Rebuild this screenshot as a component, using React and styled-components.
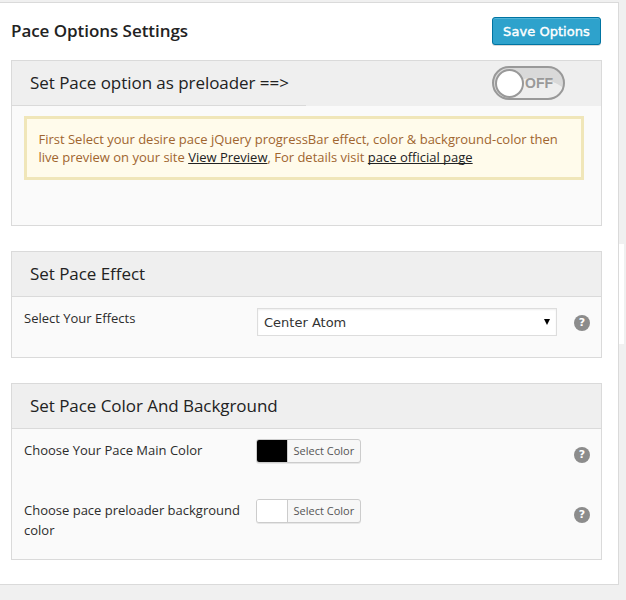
import React from "react";
import styled, { createGlobalStyle } from "styled-components";

const GlobalStyle = createGlobalStyle`
  * { box-sizing: border-box; }
  body { margin: 0; background: #f0f0f0; font-family: "Open Sans", sans-serif; color: #222; }
  button { font: inherit; }
`;

const Page = styled.div`
  display: flex;
  align-items: flex-start;
  width: 626px;
  height: 600px;
  padding-top: 2px;
  overflow: hidden;
`;

const Card = styled.main`
  width: 619px;
  height: 583px;
  padding: 14px 16px 0 11px;
  background: #fff;
  border: 1px solid #dadada;
  border-left: 0;
`;

const SideTab = styled.div`
  width: 5px;
  height: 100px;
  margin-top: 242px;
  background: #fff;
`;

const TopBar = styled.header`
  display: flex;
  justify-content: space-between;
  align-items: flex-start;
  height: 43px;
`;

const Title = styled.h1`
  margin: 2px 0 0;
  font-size: 17px;
  line-height: 24px;
  font-weight: 600;
  letter-spacing: -0.05px;
`;

const SaveButton = styled.button`
  width: 109px;
  height: 28px;
  margin-right: 1px;
  padding: 0;
  border: 1px solid #0074a2;
  border-radius: 3px;
  background: #2ea2cc;
  box-shadow: inset 0 1px 0 rgba(120, 200, 230, 0.5), 0 1px 0 rgba(0, 0, 0, 0.15);
  color: #fff;
  font-family: "DejaVu Sans", sans-serif;
  font-size: 13px;
  line-height: 27px;
  letter-spacing: 0.05px;
  -webkit-text-stroke: 0.4px #fff;
  white-space: nowrap;
`;

const Panel = styled.section`
  width: 591px;
  height: ${(p) => p.$height}px;
  margin-bottom: 25px;
  border: 1px solid #dadada;
  background: #fafafa;
`;

const PanelHeader = styled.div`
  display: flex;
  height: 45px;
  background: #efefef;
  border-bottom: ${(p) => (p.$split ? "0" : "1px solid #dadada")};
`;

const PanelTitle = styled.h2`
  width: ${(p) => (p.$split ? "294px" : "auto")};
  margin: 0;
  padding-left: 18px;
  border-bottom: ${(p) => (p.$split ? "1px solid #dadada" : "0")};
  font-size: 17px;
  line-height: 44px;
  font-weight: 400;
  letter-spacing: -0.05px;
  white-space: nowrap;
`;

const Toggle = styled.button`
  display: flex;
  align-items: center;
  width: 73px;
  height: 34px;
  margin: 5px 0 0 186px;
  padding: 0 0 0 1px;
  border: 2px solid #999;
  border-radius: 17px;
  background: radial-gradient(ellipse 38px 22px at 38px 32px, #eee 97%, #d9d9d9 100%);
  color: #999;
  font-family: "Liberation Sans", sans-serif;
  font-size: 14px;
  font-weight: 700;
`;

const Knob = styled.span`
  flex: none;
  width: 29px;
  height: 29px;
  margin-right: 1px;
  border: 2px solid #999;
  border-radius: 50%;
  background: #fff;
`;

const Notice = styled.p`
  width: 560px;
  height: 64px;
  margin: 10px 0 0 12px;
  padding: 11px 0 0 11.5px;
  border: 3px solid #f0e6b9;
  background: #fffbeb;
  color: #a0652f;
  font-size: 13px;
  line-height: 18px;
  letter-spacing: -0.005px;
  white-space: nowrap;
`;

const NoticeLink = styled.a`
  color: #222;
  text-decoration: underline;
  text-decoration-skip-ink: none;
`;

const Row = styled.div`
  display: grid;
  grid-template-columns: 233px 317px 16px;
  height: 60px;
  padding-left: 12px;
`;

const Label = styled.div`
  padding-top: 11px;
  color: #2c2c2c;
  font-size: 13px;
  line-height: 20px;
`;

const SelectBox = styled.div`
  display: flex;
  justify-content: space-between;
  align-items: center;
  width: 300px;
  height: 28px;
  margin-top: 11px;
  padding: 0 5px 0 6px;
  border: 1px solid #ddd;
  background: #fff;
  box-shadow: inset 0 1px 2px rgba(0, 0, 0, 0.07);
  color: #333;
  font-family: "DejaVu Sans", sans-serif;
  font-size: 13px;
`;

const HelpWrap = styled.div`
  padding-top: 18px;
  height: 34px;
`;

const ColorButton = styled.button`
  display: flex;
  width: 105px;
  height: 24px;
  margin: 10px 0 0 -1px;
  padding: 0;
  overflow: hidden;
  border: 1px solid #ccc;
  border-radius: 3px;
  background: #f7f7f7;
  box-shadow: 0 1px 0 rgba(0, 0, 0, 0.08);
  color: #555;
  font-size: 11px;
  line-height: 22px;
  white-space: nowrap;
`;

const Swatch = styled.span`
  width: 31px;
  height: 22px;
  margin-right: 5.5px;
  border-right: 1px solid #ccc;
  background: ${(p) => p.$color};
`;

const HelpMark = styled.div`
  display: flex;
  align-items: center;
  justify-content: center;
  width: 16px;
  height: 16px;
  border-radius: 50%;
  background: #8c8c8c;
  color: #fff;
  font: 700 11px/16px "DejaVu Sans", sans-serif;
`;

function Help() {
  return (
    <HelpWrap>
      <HelpMark>?</HelpMark>
    </HelpWrap>
  );
}

function ColorRow({ label, color }) {
  return (
    <Row>
      <Label>{label}</Label>
      <div>
        <ColorButton>
          <Swatch $color={color} />
          Select Color
        </ColorButton>
      </div>
      <Help />
    </Row>
  );
}

export default function App() {
  return (
    <>
      <GlobalStyle />
      <Page>
        <Card>
          <TopBar>
            <Title>Pace Options Settings</Title>
            <SaveButton>Save Options</SaveButton>
          </TopBar>
          <Panel $height={166}>
            <PanelHeader $split>
              <PanelTitle $split>Set Pace option as preloader ==&gt;</PanelTitle>
              <Toggle>
                <Knob />
                OFF
              </Toggle>
            </PanelHeader>
            <Notice>
              First Select your desire pace jQuery progressBar effect, color &amp; background-color then
              <br />
              live preview on your site <NoticeLink>View Preview</NoticeLink>, For details visit{" "}
              <NoticeLink>pace official page</NoticeLink>
            </Notice>
          </Panel>
          <Panel $height={107}>
            <PanelHeader>
              <PanelTitle>Set Pace Effect</PanelTitle>
            </PanelHeader>
            <Row>
              <Label>Select Your Effects</Label>
              <SelectBox>
                Center Atom
                <svg width="8" height="7" viewBox="0 0 8 7">
                  <path d="M1 0h6L4 6z" fill="#000" />
                </svg>
              </SelectBox>
              <Help />
            </Row>
          </Panel>
          <Panel $height={177}>
            <PanelHeader>
              <PanelTitle>Set Pace Color And Background</PanelTitle>
            </PanelHeader>
            <ColorRow label="Choose Your Pace Main Color" color="#000" />
            <ColorRow label="Choose pace preloader background color" color="#fff" />
          </Panel>
        </Card>
        <SideTab />
      </Page>
    </>
  );
}
